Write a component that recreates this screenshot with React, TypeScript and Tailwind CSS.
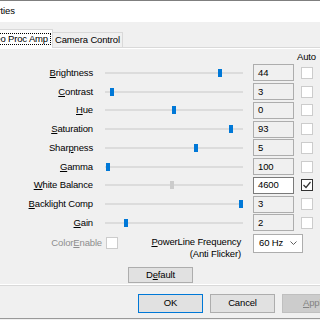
import React from 'react'

type Row = { label: string; u: number; value: string; pos: number; auto?: boolean }

const rows: Row[] = [
  { label: 'Brightness', u: 0, value: '44', pos: 113 },
  { label: 'Contrast', u: 0, value: '3', pos: 5 },
  { label: 'Hue', u: 0, value: '0', pos: 67 },
  { label: 'Saturation', u: 0, value: '93', pos: 124 },
  { label: 'Sharpness', u: 4, value: '5', pos: 89 },
  { label: 'Gamma', u: 0, value: '100', pos: 1 },
  { label: 'White Balance', u: 0, value: '4600', pos: 65, auto: true },
  { label: 'Backlight Comp', u: 0, value: '3', pos: 134 },
  { label: 'Gain', u: 0, value: '2', pos: 19 },
]

// text with an access-key underline
function Key({ text, u }: { text: string; u: number }) {
  return (
    <>
      {text.slice(0, u)}
      <span className="underline underline-offset-[1px]">{text[u]}</span>
      {text.slice(u + 1)}
    </>
  )
}

function Check({ checked }: { checked?: boolean }) {
  return (
    <div
      className={`w-[12px] h-[12px] bg-white border flex items-center justify-center ${
        checked ? 'border-[#333333]' : 'border-[#cccccc]'
      }`}
    >
      {checked && (
        <svg width="10" height="10" viewBox="0 0 10 10">
          <polyline points="1.5,5 4,7.5 8.5,2" fill="none" stroke="#333" strokeWidth="1.2" />
        </svg>
      )}
    </div>
  )
}

export default function App() {
  return (
    <div className="w-[320px] h-[320px] overflow-hidden bg-[#f0f0f0] text-black text-[9.5px] tracking-[-0.15px] font-['Liberation_Sans',Arial,sans-serif] flex flex-col">
      {/* title bar */}
      <div className="h-[22px] shrink-0 bg-white border-t border-[#7f7f7f] flex items-center">
        <span className="ml-[-27px] whitespace-nowrap">Properties</span>
      </div>

      {/* tabs */}
      <div className="h-[25px] shrink-0 flex items-end">
        <div className="relative z-10 shrink-0 ml-[-26px] w-[79px] h-[19px] -mb-[1px] bg-white border border-b-0 border-[#d9d9d9] flex items-center justify-end pr-[1px]">
          <span className="border border-dotted border-black px-[2px] leading-[10px] whitespace-nowrap">Video Proc Amp</span>
        </div>
        <div className="shrink-0 w-[70px] h-[15px] bg-[#f0f0f0] border border-b-0 border-l-0 border-[#d9d9d9] flex items-center justify-center whitespace-nowrap">
          Camera Control
        </div>
      </div>

      {/* tab page */}
      <div className="shrink-0 border-y border-[#d9d9d9]">
        <div className="border-y border-white pt-[1px] pb-[1px]">
          <div className="h-[13.6px] flex items-center">
            <span className="ml-[297px]">Auto</span>
          </div>

          {rows.map((r) => (
            <div key={r.label} className="h-[18.75px] flex items-center">
              <div className="shrink-0 w-[93px] text-right whitespace-nowrap">
                <Key text={r.label} u={r.u} />
              </div>
              <div className="relative shrink-0 ml-[12px] w-[138px] h-[2px] bg-[#dcdcdc]">
                <div
                  className={`absolute top-[-3px] w-[4px] h-[8px] ${r.auto ? 'bg-[#cccccc]' : 'bg-[#0078d7]'}`}
                  style={{ left: r.pos }}
                />
              </div>
              <div
                className={`shrink-0 ml-[10px] w-[41px] h-[17px] border flex items-center pl-[4px] ${
                  r.auto ? 'bg-white border-[#7a7a7a]' : 'bg-[#f0f0f0] border-[#adadad]'
                }`}
              >
                {r.value}
              </div>
              <div className="shrink-0 ml-[7px]">
                <Check checked={r.auto} />
              </div>
            </div>
          ))}

          {/* ColorEnable / PowerLine row */}
          <div className="mt-[1.65px] flex items-start">
            <div className="shrink-0 h-[19px] flex items-center">
              <div className="w-[102px] text-right text-[#8e8e8e] whitespace-nowrap">
                <Key text="ColorEnable" u={5} />
              </div>
              <div className="ml-[4px]">
                <Check />
              </div>
            </div>
            <div className="shrink-0 w-[123px] mt-[2px] text-right leading-[12px] whitespace-nowrap">
              <div>
                <Key text="PowerLine Frequency" u={0} />
              </div>
              <div>(Anti Flicker)</div>
            </div>
            <div className="shrink-0 ml-[12px] w-[50px] h-[19px] bg-white border border-[#adadad] flex items-center justify-between pl-[5px] pr-[5px]">
              <span>60 Hz</span>
              <svg width="7" height="4" viewBox="0 0 7 4">
                <polyline points="0.5,0.5 3.5,3.5 6.5,0.5" fill="none" stroke="#606060" strokeWidth="1" />
              </svg>
            </div>
          </div>

          <div className="mt-[7px] flex">
            <div className="shrink-0 ml-[128px] w-[65px] h-[16px] bg-[#e1e1e1] border border-[#adadad] flex items-center justify-center">
              <Key text="Default" u={1} />
            </div>
          </div>
        </div>
      </div>

      {/* dialog buttons */}
      <div className="h-[33px] shrink-0 flex items-start pt-[8px] border-b border-[#999999]">
        <div className="shrink-0 ml-[138px] w-[65px] h-[19px] bg-[#e1e1e1] border border-[#0078d7] flex items-center justify-center">
          OK
        </div>
        <div className="shrink-0 ml-[7px] w-[65px] h-[19px] bg-[#e1e1e1] border border-[#adadad] flex items-center justify-center">
          Cancel
        </div>
        <div className="shrink-0 ml-[7px] w-[65px] h-[19px] bg-[#cccccc] border border-[#bfbfbf] text-[#838383] flex items-center justify-center whitespace-nowrap">
          <Key text="Apply" u={0} />
        </div>
      </div>
    </div>
  )
}
